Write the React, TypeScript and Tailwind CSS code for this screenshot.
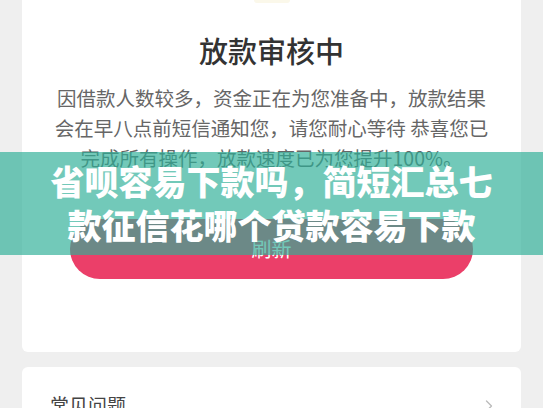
import { ChevronRight } from 'lucide-react'

export default function App() {
  return (
    <div className="relative min-h-[408px] w-full overflow-hidden bg-[#efefef] font-['Noto_Sans_CJK_SC','Noto_Sans',sans-serif]">
      <div className="mx-[22px] flex flex-col items-center rounded-b-[6px] bg-white pb-[73px]">
        <div className="h-[3px] w-[36px] rounded-b-full bg-[#fbf8ea]" />
        <h1 className="mt-[27px] text-[29px] leading-[40px] font-medium text-[#333333]">
          放款审核中
        </h1>
        <p className="mt-[13px] w-[440px] text-center text-[19.5px] leading-[30px] text-[#666666]">
          因借款人数较多，资金正在为您准备中，放款结果会在早八点前短信通知您，请您耐心等待 恭喜您已完成所有操作，放款速度已为您提升100%。
        </p>
        <button className="mt-[46px] h-[60px] w-[403px] rounded-full bg-[#eb3f69] text-[20px] text-white">
          刷新
        </button>
      </div>

      <div className="mx-[22px] mt-[15px] flex items-start justify-between rounded-[6px] bg-white pt-[24px] pr-[22px] pb-[24px] pl-[28px]">
        <span className="text-[19px] leading-[28px] text-[#444444]">常见问题</span>
        <ChevronRight className="mt-[5px] h-[20px] w-[20px] text-[#bbbbbb]" strokeWidth={1.6} />
      </div>

      <div className="absolute top-[152px] right-0 left-0 h-[103px] bg-[rgba(45,175,150,0.67)] px-[40px] py-[7px] text-center text-[34px] leading-[44px] font-black text-white">
        省呗容易下款吗，简短汇总七款征信花哪个贷款容易下款
      </div>
    </div>
  )
}
